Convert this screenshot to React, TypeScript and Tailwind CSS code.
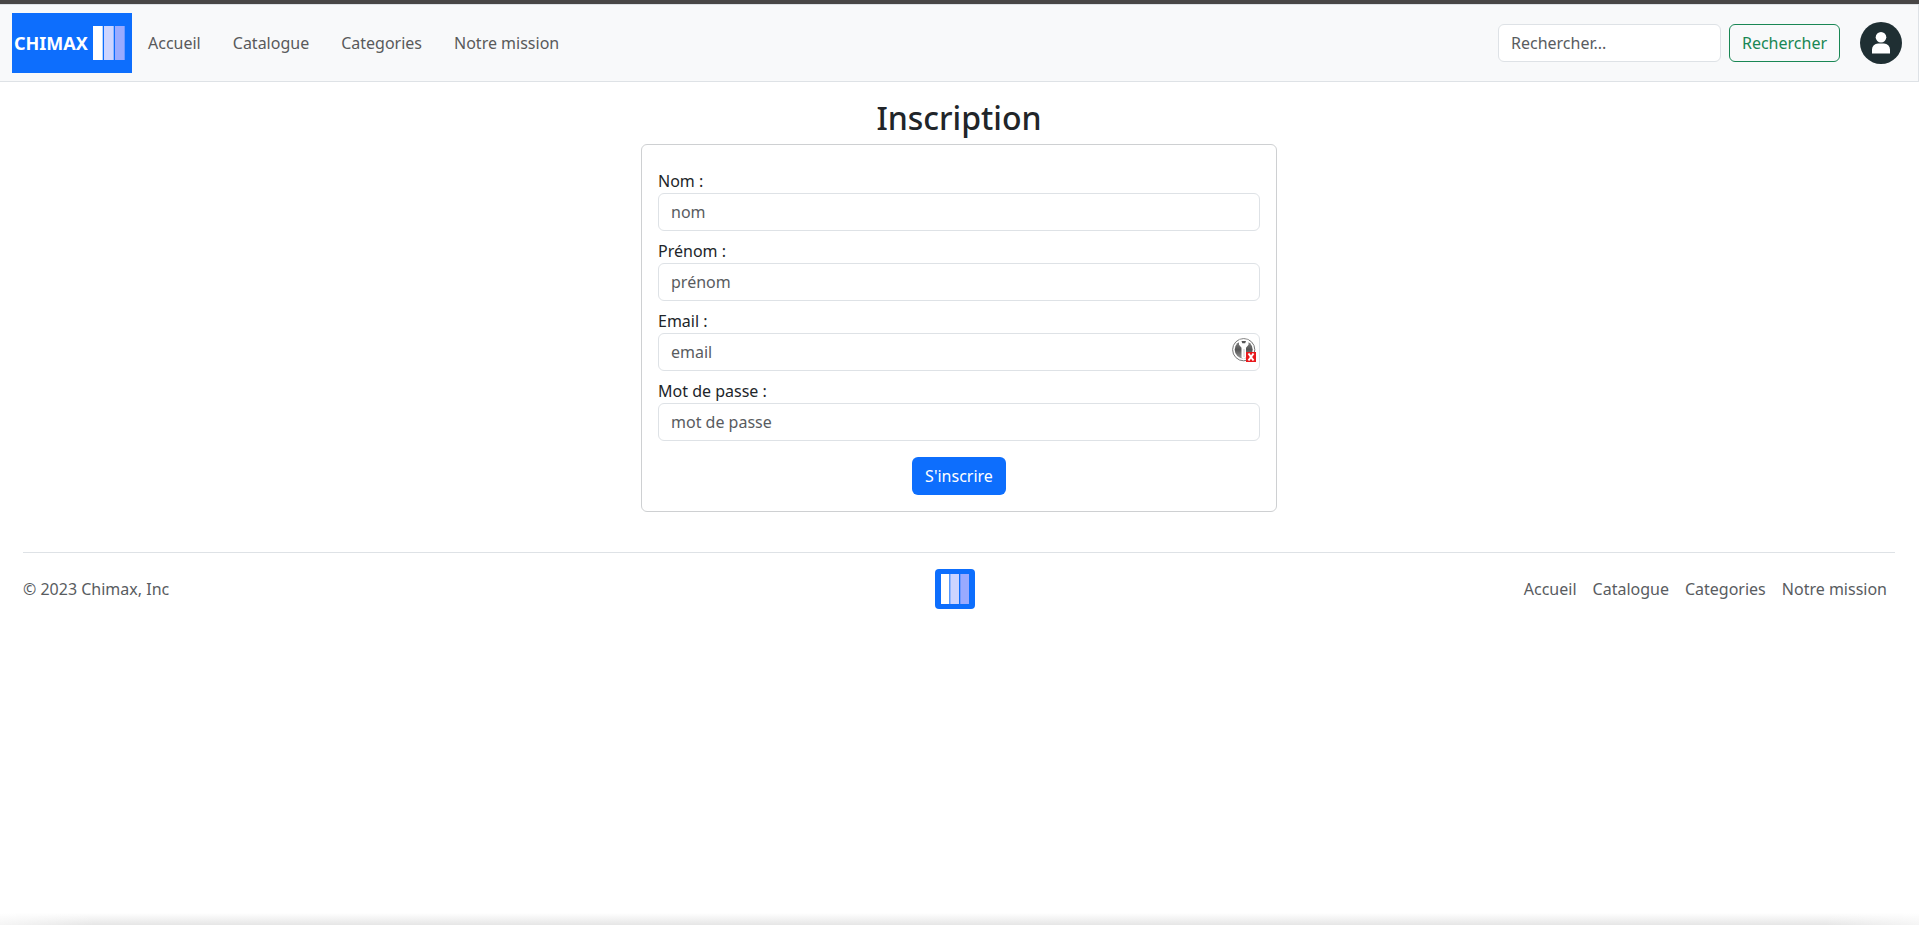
const links = ['Accueil', 'Catalogue', 'Categories', 'Notre mission'];

const fields = [
  { label: 'Nom :', placeholder: 'nom', type: 'text' },
  { label: 'Prénom :', placeholder: 'prénom', type: 'text' },
  { label: 'Email :', placeholder: 'email', type: 'email' },
  { label: 'Mot de passe :', placeholder: 'mot de passe', type: 'password' },
];

function Brand() {
  return (
    <a href="#" className="flex h-[60px] w-[120px] items-center bg-[#0d6efd] pl-[2px]">
      <span className="w-[79px] text-[18px] leading-6 font-bold text-white">CHIMAX</span>
      <svg className="h-[34px] w-[32px]" viewBox="0 0 32 34">
        <rect x="0" y="0" width="9.7" height="34" fill="#fff" />
        <rect x="11" y="0" width="9.7" height="34" fill="#ccd4ff" />
        <rect x="22" y="0" width="9.7" height="34" fill="#99aaff" />
      </svg>
    </a>
  );
}

function FooterLogo() {
  return (
    <svg className="size-10" viewBox="0 0 40 40">
      <rect width="40" height="40" rx="4" fill="#0d6efd" />
      <rect x="6" y="5" width="8.3" height="30" fill="#fff" />
      <rect x="15.3" y="5" width="8.7" height="30" fill="#ccd4ff" />
      <rect x="25.3" y="5" width="8.7" height="30" fill="#99aaff" />
    </svg>
  );
}

function Avatar() {
  return (
    <svg className="size-[42px]" viewBox="0 0 42 42">
      <circle cx="21" cy="21" r="21" fill="#1f2f33" />
      <circle cx="21" cy="15.2" r="5.3" fill="#fff" />
      <path d="M12 31.500v-4a6 6 0 0 1 6-6h6a6 6 0 0 1 6 6v4z" fill="#fff" />
    </svg>
  );
}

function KeyBadge() {
  return (
    <svg className="absolute top-[5px] right-[4px] size-6" viewBox="0 0 24 24">
      <defs>
        <linearGradient id="disc" x1="0" y1="0" x2="0" y2="1">
          <stop offset="0" stopColor="#888" />
          <stop offset="0.500" stopColor="#555" />
          <stop offset="1" stopColor="#999" />
        </linearGradient>
      </defs>
      <circle cx="11.700" cy="11.700" r="11.100" fill="#fff" stroke="#777" strokeWidth="1" />
      <circle cx="11.700" cy="11.700" r="9" fill="url(#disc)" />
      <path d="M7 1.800v5l2.500 3v9.700l2.200 1.500 2.300-1.500V9.800l2.500-3v-5z" fill="#fff" />
      <path d="M9.500 3h4.500l-.8 2.200h-2.900z" fill="#555" />
      <path d="M12 11v8" stroke="#bbb" strokeWidth="0.800" />
      <rect x="14" y="14" width="10" height="10" fill="#e8191c" />
      <path d="M16.500 15.500l5 7m0-7l-5 7" stroke="#fff" strokeWidth="2" />
    </svg>
  );
}

export default function App() {
  return (
    <div className="flex h-[925px] flex-col overflow-hidden bg-white font-['Noto_Sans',sans-serif] text-base leading-6 text-[#212529]">
      <div className="h-1 shrink-0 bg-[#484646]" />
      <nav className="flex h-[78px] shrink-0 items-center border border-l-0 border-[#dee2e6] bg-[#f8f9fa] pr-4 pl-3">
        <Brand />
        <ul className="ml-4 flex gap-8 text-[#595a5b]">
          {links.map((link) => (
            <li key={link}>
              <a href="#">{link}</a>
            </li>
          ))}
        </ul>
        <form className="ml-auto flex gap-2">
          <input
            type="search"
            placeholder="Rechercher..."
            className="h-[38px] w-[223px] rounded-md border border-[#dee2e6] bg-white px-3 placeholder:text-[#595c5f]"
          />
          <button type="button" className="h-[38px] w-[111px] rounded-md border border-[#198754] text-[#198754]">
            Rechercher
          </button>
        </form>
        <a href="#" className="ml-5">
          <Avatar />
        </a>
      </nav>

      <main className="flex flex-col items-center pt-[17px] pr-px">
        <h2 className="text-[32px] leading-[38px] font-medium">Inscription</h2>
        <form className="mt-[7px] flex w-[636px] flex-col rounded-md border border-[#ced0d2] px-4 pt-4 pb-4">
          {fields.map((field) => (
            <label key={field.label} className="mt-2 flex flex-col">
              <span>{field.label}</span>
              <span className="relative flex">
                <input
                  type={field.type}
                  placeholder={field.placeholder}
                  className="h-[38px] w-full rounded-md border border-[#dee2e6] bg-white px-3 placeholder:text-[#595c5f]"
                />
                {field.type === 'email' && <KeyBadge />}
              </span>
            </label>
          ))}
          <button type="button" className="mt-4 h-[38px] w-[94px] self-center rounded-md bg-[#0d6efd] text-white">
            S'inscrire
          </button>
        </form>
      </main>

      <footer className="mr-6 ml-[23px] mt-10 flex items-center border-t border-[#dee2e6] pt-4 text-[#595c5f]">
        <p className="w-[912px]">© 2023 Chimax, Inc</p>
        <FooterLogo />
        <ul className="ml-auto flex gap-4 pr-2">
          {links.map((link) => (
            <li key={link}>
              <a href="#">{link}</a>
            </li>
          ))}
        </ul>
      </footer>

      <div className="mt-auto h-3 bg-linear-to-b from-white to-[#e6e6e6]">
        <div className="h-full bg-linear-to-r from-white/60 via-transparent via-5% to-transparent">
          <div className="h-full bg-linear-to-l from-white/60 via-transparent via-5% to-transparent" />
        </div>
      </div>
    </div>
  );
}
